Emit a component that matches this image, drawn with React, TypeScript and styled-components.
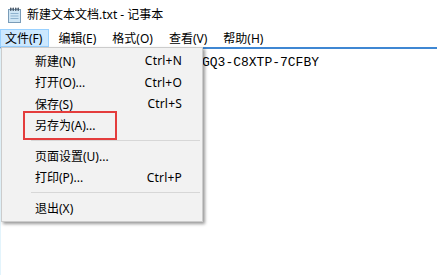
import React from "react";
import styled, { createGlobalStyle } from "styled-components";

const Global = createGlobalStyle`
  html, body {
    margin: 0;
    padding: 0;
    background: #ffffff;
  }
`;

const Window = styled.div`
  width: 437px;
  height: 275px;
  display: flex;
  flex-direction: column;
  background: #ffffff;
  font-family: "Noto Sans", "Noto Sans CJK SC", sans-serif;
  font-size: 12px;
  color: #000;
  overflow: hidden;
`;

const TitleBar = styled.div`
  height: 29px;
  display: flex;
  align-items: center;
  gap: 6px;
  padding-left: 8px;
`;

const Title = styled.span`
  font-size: 12px;
  line-height: 14px;
  padding-top: 1px;
`;

const MenuBar = styled.div`
  position: relative;
  height: 18px;
  display: flex;
  gap: 4px;
  z-index: 2;
`;

const MenuItem = styled.div<{ active?: boolean }>`
  display: flex;
  align-items: center;
  padding: 0 7px 0 5px;
  background: ${(p) => (p.active ? "#cce8ff" : "transparent")};
  outline: ${(p) => (p.active ? "1px solid #99d1ff" : "none")};
  outline-offset: -1px;
  white-space: nowrap;
`;

const Editor = styled.div`
  flex: 1;
  border-top: 2px solid #3f87d3;
  border-left: 1px solid #e3f4fc;
  padding: 6px 4px 6px 201px;
  font-family: "Liberation Mono", monospace;
  font-size: 13px;
  line-height: 16px;
  white-space: pre;
`;

const Dropdown = styled.div`
  position: absolute;
  top: 18px;
  left: 1px;
  width: 200px;
  padding: 2px 0;
  background: #f2f2f2;
  border: 1px solid #cccccc;
  box-shadow: 2px 2px 3px rgba(0, 0, 0, 0.4);
`;

const Row = styled.div`
  position: relative;
  height: 21.5px;
  display: flex;
  align-items: center;
  justify-content: space-between;
  padding: 0 20px 0 33px;
  white-space: nowrap;
`;

const Shortcut = styled.span`
  letter-spacing: 0.2px;
`;

const Separator = styled.div`
  height: 9px;
  display: flex;
  align-items: center;
  padding-left: 29px;
  padding-right: 2px;

  &::after {
    content: "";
    flex: 1;
    height: 1px;
    background: #d7d7d7;
  }
`;

const Highlight = styled.div`
  position: absolute;
  top: -4px;
  bottom: -4px;
  left: 21px;
  width: 90px;
  border: 2px solid #e43d3d;
  pointer-events: none;
`;

const NotepadIcon = () => (
  <svg width="13" height="16" viewBox="0 0 13 16">
    <rect x="0.5" y="2.5" width="12" height="13" fill="#cfe6f5" stroke="#7a9cb8" />
    <line x1="2.5" y1="6.5" x2="10.5" y2="6.5" stroke="#8fb3cf" />
    <line x1="2.5" y1="9" x2="10.5" y2="9" stroke="#8fb3cf" />
    <line x1="2.5" y1="11.5" x2="10.5" y2="11.5" stroke="#8fb3cf" />
    {[2, 4.5, 7, 9.5].map((x) => (
      <rect key={x} x={x} y="0.5" width="1.5" height="3.5" rx="0.7" fill="#4b5a6a" />
    ))}
  </svg>
);

const items: { label?: string; key?: string; mark?: boolean }[] = [
  { label: "新建(N)", key: "Ctrl+N" },
  { label: "打开(O)...", key: "Ctrl+O" },
  { label: "保存(S)", key: "Ctrl+S" },
  { label: "另存为(A)...", mark: true },
  {},
  { label: "页面设置(U)..." },
  { label: "打印(P)...", key: "Ctrl+P" },
  {},
  { label: "退出(X)" },
];

function App() {
  return (
    <>
      <Global />
      <Window>
        <TitleBar>
          <NotepadIcon />
          <Title>新建文本文档.txt - 记事本</Title>
        </TitleBar>
        <MenuBar>
          <MenuItem active>文件(F)</MenuItem>
          <MenuItem>编辑(E)</MenuItem>
          <MenuItem>格式(O)</MenuItem>
          <MenuItem>查看(V)</MenuItem>
          <MenuItem>帮助(H)</MenuItem>
          <Dropdown>
            {items.map((it, i) =>
              it.label ? (
                <Row key={i}>
                  <span>{it.label}</span>
                  {it.key && <Shortcut>{it.key}</Shortcut>}
                  {it.mark && <Highlight />}
                </Row>
              ) : (
                <Separator key={i} />
              )
            )}
          </Dropdown>
        </MenuBar>
        <Editor>GQ3-C8XTP-7CFBY</Editor>
      </Window>
    </>
  );
}

export default App;
